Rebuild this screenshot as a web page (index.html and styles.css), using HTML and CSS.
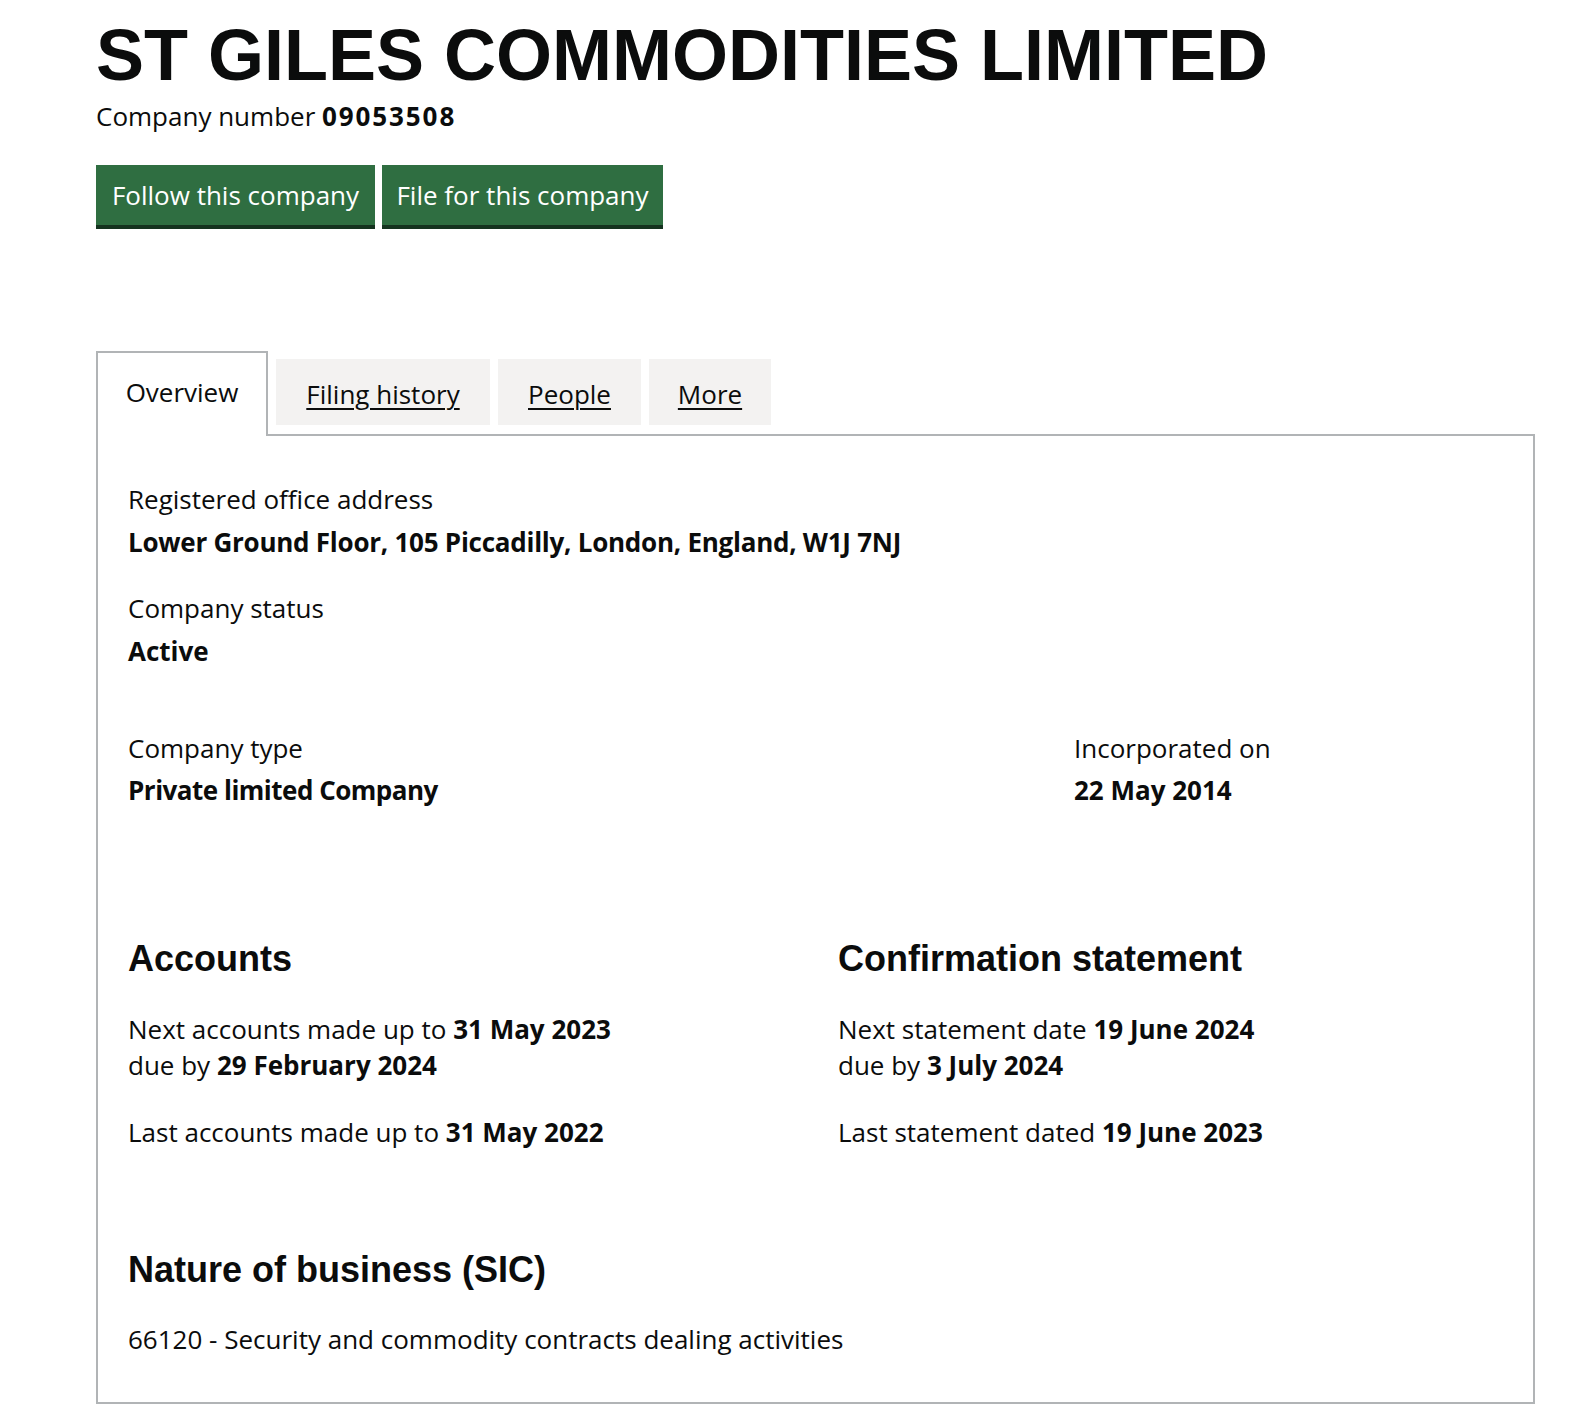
FILE: index.html
```html
<!DOCTYPE html>
<html lang="en">
<head>
<meta charset="utf-8">
<title>ST GILES COMMODITIES LIMITED</title>
<link rel="stylesheet" href="styles.css">
</head>
<body>
<main class="page">
  <h1 class="title">ST GILES COMMODITIES LIMITED</h1>
  <p class="company-number">Company number <strong class="number">09053508</strong></p>
  <div class="actions">
    <a class="btn btn-follow" href="#">Follow this company</a>
    <a class="btn btn-file" href="#">File for this company</a>
  </div>

  <div class="tabs">
    <ul class="tab-list">
      <li class="tab tab-selected tab-overview"><span>Overview</span></li>
      <li class="tab tab-filing"><a href="#">Filing history</a></li>
      <li class="tab tab-people"><a href="#">People</a></li>
      <li class="tab tab-more"><a href="#">More</a></li>
    </ul>
    <section class="panel">
      <dl class="field">
        <dt class="label">Registered office address</dt>
        <dd class="value value-address">Lower Ground Floor, 105 Piccadilly, London, England, W1J 7NJ</dd>
      </dl>
      <dl class="field field-status">
        <dt class="label">Company status</dt>
        <dd class="value">Active</dd>
      </dl>
      <div class="row-type">
        <dl class="field">
          <dt class="label">Company type</dt>
          <dd class="value value-type">Private limited Company</dd>
        </dl>
        <dl class="field">
          <dt class="label">Incorporated on</dt>
          <dd class="value">22 May 2014</dd>
        </dl>
      </div>

      <div class="row-dates">
        <div class="col">
          <h2 class="heading">Accounts</h2>
          <p class="text">Next accounts made up to <strong>31 May 2023</strong><br>due by <strong>29 February 2024</strong></p>
          <p class="text text-last">Last accounts made up to <strong>31 May 2022</strong></p>
        </div>
        <div class="col">
          <h2 class="heading">Confirmation statement</h2>
          <p class="text">Next statement date <strong>19 June 2024</strong><br>due by <strong>3 July 2024</strong></p>
          <p class="text text-last">Last statement dated <strong>19 June 2023</strong></p>
        </div>
      </div>

      <h2 class="heading heading-sic">Nature of business (SIC)</h2>
      <p class="text text-sic">66120 - Security and commodity contracts dealing activities</p>
    </section>
  </div>
</main>
</body>
</html>
```

FILE: styles.css
```css
* { box-sizing: border-box; }

html, body {
  margin: 0;
  padding: 0;
  background: #ffffff;
}

body {
  color: #0b0c0c;
  font-family: "Open Sans", "Noto Sans", sans-serif;
  font-size: 26px;
  line-height: 36px;
}

.page {
  padding: 15px 0 0 96px;
  width: 1535px;
}

.title {
  margin: 0;
  font-family: "Liberation Sans", Arial, sans-serif;
  font-weight: 700;
  font-size: 72px;
  line-height: 80px;
  white-space: nowrap;
}

.company-number {
  margin: 3px 0 0;
}

.number { letter-spacing: 1.9px; }

strong { font-weight: 700; }

.actions {
  display: flex;
  gap: 7px;
  margin-top: 31px;
}

.btn {
  display: block;
  height: 60px;
  padding: 12px 0 12px;
  line-height: 36px;
  text-align: center;
  color: #ffffff;
  text-decoration: none;
  background: #2f6e41;
  box-shadow: 0 4px 0 #15331f;
}

.btn-follow { width: 279px; }
.btn-file { width: 281px; }

.tabs { margin-top: 126px; }

.tab-list {
  display: flex;
  align-items: flex-start;
  gap: 8px;
  margin: 0;
  padding: 0;
  list-style: none;
  position: relative;
  z-index: 1;
}

.tab {
  text-align: center;
  background: #f3f2f1;
  margin-top: 8px;
  padding: 17px 0 13px;
  height: 66px;
}

.tab a {
  color: #0b0c0c;
  text-decoration: underline;
  text-decoration-thickness: 1.5px;
  text-underline-offset: 4px;
}

.tab-selected {
  margin-top: 0;
  margin-bottom: -2px;
  height: 85px;
  padding: 21px 0 24px;
  background: #ffffff;
  border: 2px solid #b1b4b6;
  border-bottom: 0;
}

.tab-overview { width: 172px; }
.tab-filing { width: 214px; }
.tab-people { width: 143px; }
.tab-more { width: 122px; }

.panel {
  width: 1439px;
  border: 2px solid #b1b4b6;
  padding: 45px 30px 45px;
}

.field { margin: 0; }

.label { margin: 0; }

.value {
  margin: 7px 0 0;
  font-weight: 700;
}

.value-address { letter-spacing: -0.25px; }
.value-type { letter-spacing: -0.5px; }

.field-status { margin-top: 30px; }

.row-type {
  display: grid;
  grid-template-columns: 946px 1fr;
  margin-top: 61px;
}

.row-type .value { margin-top: 6px; }

.row-dates {
  display: grid;
  grid-template-columns: 710px 1fr;
  margin-top: 131px;
}

.heading {
  margin: 0;
  font-family: "Liberation Sans", Arial, sans-serif;
  font-weight: 700;
  font-size: 36px;
  line-height: 40px;
}

.text { margin: 31px 0 0; }

.row-dates .text:first-of-type { margin-top: 32px; }

.heading-sic { margin-top: 100px; }
```
